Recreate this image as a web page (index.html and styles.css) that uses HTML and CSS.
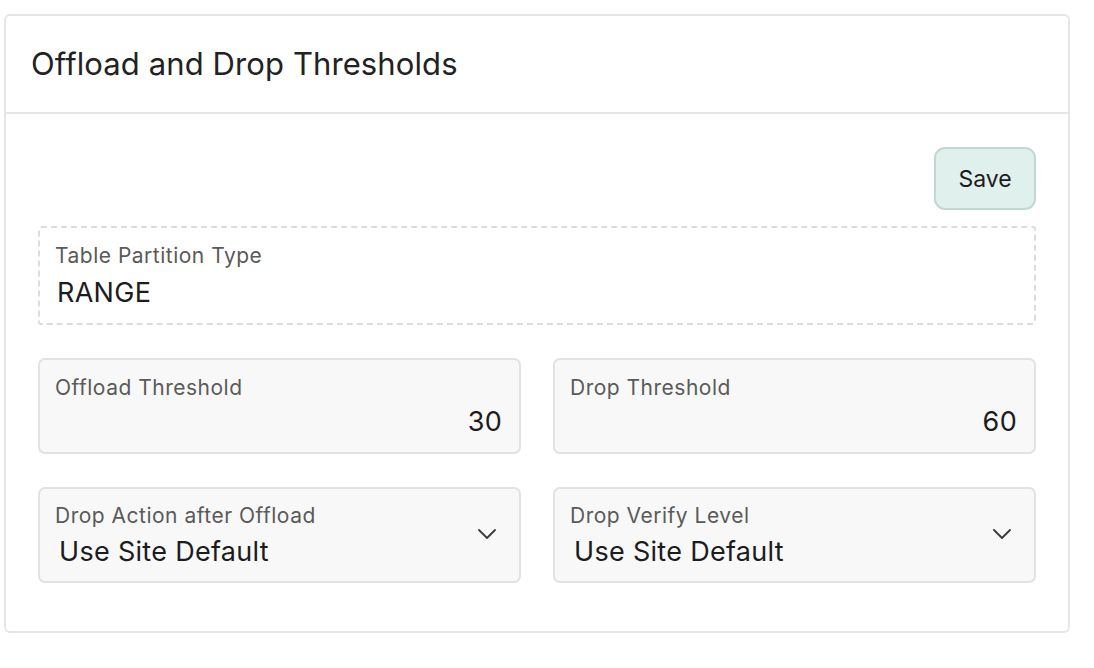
FILE: index.html
```html
<!DOCTYPE html>
<html>
<head>
<meta charset="utf-8">
<link rel="stylesheet" href="styles.css">
</head>
<body>
<section class="card">
  <header class="card-header">
    <h2 class="card-title">Offload and Drop Thresholds</h2>
  </header>
  <div class="card-body">
    <div class="actions">
      <button class="btn-save">Save</button>
    </div>
    <div class="readonly-field">
      <div class="label">Table Partition Type</div>
      <div class="readonly-value">RANGE</div>
    </div>
    <div class="grid">
      <div class="field">
        <div class="label">Offload Threshold</div>
        <div class="num-value">30</div>
      </div>
      <div class="field">
        <div class="label">Drop Threshold</div>
        <div class="num-value">60</div>
      </div>
      <div class="field select">
        <div class="select-text">
          <div class="label">Drop Action after Offload</div>
          <div class="select-value">Use Site Default</div>
        </div>
        <svg class="chevron" width="18" height="10" viewBox="0 0 18 10"><path d="M1 1 L9 9 L17 1" fill="none" stroke="#3a3a3a" stroke-width="1.8" stroke-linecap="round" stroke-linejoin="round"/></svg>
      </div>
      <div class="field select">
        <div class="select-text">
          <div class="label">Drop Verify Level</div>
          <div class="select-value">Use Site Default</div>
        </div>
        <svg class="chevron" width="18" height="10" viewBox="0 0 18 10"><path d="M1 1 L9 9 L17 1" fill="none" stroke="#3a3a3a" stroke-width="1.8" stroke-linecap="round" stroke-linejoin="round"/></svg>
      </div>
    </div>
  </div>
</section>
</body>
</html>
```

FILE: styles.css
```css
* { box-sizing: border-box; }
html, body { margin: 0; padding: 0; background: #fff; }
body {
  font-family: Inter, "Noto Sans", "Liberation Sans", sans-serif;
  color: #222;
  padding: 14px 25px 0 4px;
}
.card {
  width: 1066px;
  border: 2px solid #e6e6e6;
  border-radius: 6px;
  background: #fff;
}
.card-header {
  height: 98px;
  border-bottom: 2px solid #e6e6e6;
  display: flex;
  align-items: center;
  padding: 0 0 0 25px;
}
.card-title {
  margin: 0;
  font-size: 31px;
  font-weight: 400;
  color: #222;
  letter-spacing: 0.1px;
  line-height: 36px;
}
.card-body {
  padding: 33px 32px 48px 32px;
}
.actions {
  display: flex;
  justify-content: flex-end;
  margin-bottom: 16px;
}
.btn-save {
  width: 102px;
  height: 63px;
  background: #e0f0ec;
  border: 2px solid #c3d8d2;
  border-radius: 11px;
  font-family: inherit;
  font-size: 23px;
  color: #1c1c1c;
}
.readonly-field {
  height: 99px;
  border: 2px dashed #dcdcdc;
  border-radius: 3px;
  padding: 16px 16px 0 15px;
}
.label {
  font-size: 21px;
  color: #5a5a5a;
  line-height: 24px;
  letter-spacing: 0.5px;
}
.readonly-value {
  font-size: 27px;
  color: #1c1c1c;
  margin-top: 10px;
  padding-left: 2px;
  line-height: 30px;
  letter-spacing: 0.3px;
}
.grid {
  display: grid;
  grid-template-columns: 1fr 1fr;
  column-gap: 32px;
  row-gap: 33px;
  margin-top: 33px;
}
.field {
  height: 96px;
  background: #f8f8f8;
  border: 2px solid #e2e2e2;
  border-radius: 7px;
  padding: 16px 17px 0 15px;
}
.num-value {
  text-align: right;
  font-size: 27px;
  color: #1c1c1c;
  margin-top: 7px;
  line-height: 30px;
  letter-spacing: 0.3px;
}
.field.select {
  display: flex;
  align-items: center;
  justify-content: space-between;
  padding: 15px 23px 0 15px;
}
.select-text {
  align-self: flex-start;
}
.select-value {
  font-size: 27px;
  color: #1c1c1c;
  margin-top: 9px;
  padding-left: 4px;
  line-height: 30px;
  letter-spacing: 0.3px;
}
.chevron {
  margin-top: -17px;
}
```
